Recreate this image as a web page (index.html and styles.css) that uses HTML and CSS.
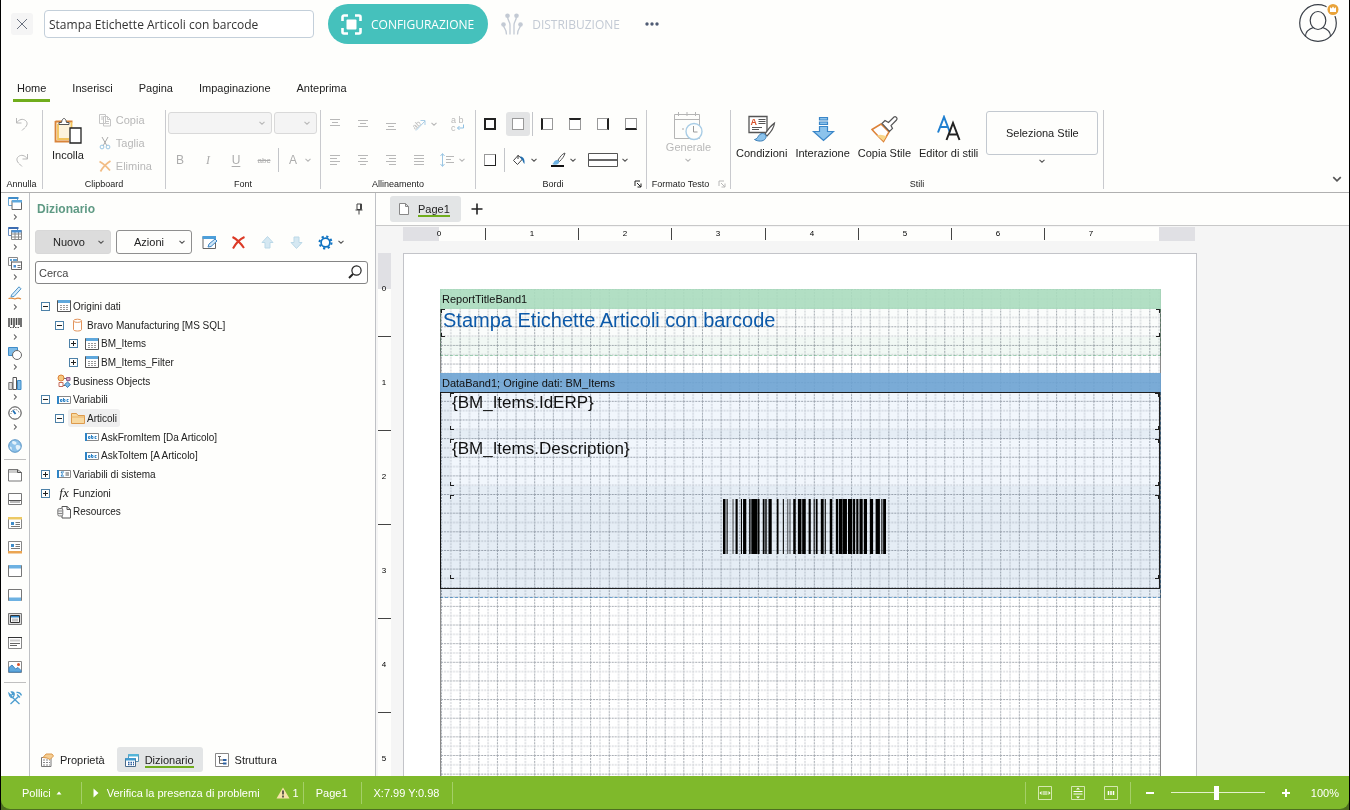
FILE: index.html
```html
<!DOCTYPE html>
<html lang="it">
<head>
    <meta charset="UTF-8">
    <meta name="viewport" content="width=device-width, initial-scale=1.0">
    <title>Stampa Etichette Articoli con barcode</title>
    <link rel="stylesheet" href="styles.css">
</head>
<body>
    <svg class="sprite" aria-hidden="true">
        <symbol id="chev" viewBox="0 0 8 8"><path d="M1.5 2.8 4 5.2 6.5 2.8" fill="none" stroke="currentColor" stroke-width="1.1"/></symbol>
        <symbol id="chev-right" viewBox="0 0 8 8"><path d="M3 1.5 5.3 4 3 6.5" fill="none" stroke="currentColor" stroke-width="1.1"/></symbol>
        <symbol id="launcher" viewBox="0 0 8 8"><path d="M1 6V1h5M3 3l4 4M7 3.5V7H3.5" fill="none" stroke="currentColor" stroke-width="1"/></symbol>
        <symbol id="table" viewBox="0 0 14 14"><path d="M.5 1.5h13v11H.5z" fill="#fff" stroke="#555"/><path d="M1 1h12v3H1z" fill="#5fa8dc"/><path d="M3 6.5h8M3 8.5h8M3 10.5h8" stroke="#999" stroke-dasharray="2 1"/></symbol>
        <symbol id="abc" viewBox="0 0 14 14"><path d="M.5 3.5h13v7H.5z" fill="#fff" stroke="#888"/><path d="M1 3v8" stroke="#2e84c6" stroke-width="2"/><path d="M3.5 6.5h1.500v2H3.5zM6.500 5v3.500H8v-2H6.500M11.500 6.500H10v2h1.500" fill="none" stroke="#2e84c6"/></symbol>
    </svg>

    <div class="app">
        <header class="topbar">
            <button class="close" aria-label="Chiudi"><svg width="12" height="12" viewBox="0 0 12 12"><path d="M1 1l10 10M11 1 1 11" stroke="#6b7280" fill="none"/></svg></button>
            <input class="report-name" type="text" value="Stampa Etichette Articoli con barcode" aria-label="Nome report">
            <button class="step active">
                <svg width="21" height="21" viewBox="0 0 21 21"><path d="M1.5 7V3a1.5 1.5 0 0 1 1.5-1.5h4M14 1.5h4A1.5 1.5 0 0 1 19.5 3v4M19.5 14v4a1.5 1.5 0 0 1-1.5 1.5h-4M7 19.5H3A1.5 1.5 0 0 1 1.5 18v-4" fill="none" stroke="#fff" stroke-width="2.6"/><rect x="5.5" y="5.5" width="10" height="10" rx="1" fill="#fff"/></svg>
                CONFIGURAZIONE
            </button>
            <button class="step">
                <svg width="22" height="22" viewBox="0 0 22 22"><g fill="none" stroke="#c3cad4" stroke-width="1.3"><path d="M2.5 12c0 4 3 3 3 9.5M6.5 3c0 5 2.5 5 2.5 9v9.5M15.5 3c0 5-2.5 5-2.5 9v9.5M19.5 12c0 4-3 3-3 9.5"/></g><g fill="#c3cad4"><circle cx="2.5" cy="11.5" r="2.3"/><circle cx="6.5" cy="2.8" r="2.3"/><circle cx="15.5" cy="2.8" r="2.3"/><circle cx="19.5" cy="11.5" r="2.3"/></g></svg>
                DISTRIBUZIONE
            </button>
            <button class="more" aria-label="Altro"><svg width="14" height="4" viewBox="0 0 14 4" fill="#4f5b73"><circle cx="2" cy="2" r="1.7"/><circle cx="7" cy="2" r="1.7"/><circle cx="12" cy="2" r="1.7"/></svg></button>
            <button class="avatar" aria-label="Profilo">
                <svg width="40" height="42" viewBox="0 3 40 42"><g fill="none" stroke="#3b4048" stroke-width="1.2"><circle cx="19" cy="23" r="18.3"/><ellipse cx="19" cy="20.5" rx="7.8" ry="9"/><path d="M6.5 36.5c0-5 3-7.5 8-9M31.5 36.5c0-5-3-7.5-8-9"/></g><circle cx="34" cy="9.500" r="7" fill="#fefefc"/><circle cx="34" cy="9.500" r="5.5" fill="#e9a33a"/><path d="M31 7l1.500 1.500L34 6.500l1.500 2L37 7v5h-6z" fill="#fff"/></svg>
            </button>
        </header>

        <nav class="tabs">
            <a class="tab active" href="#">Home</a>
            <a class="tab" href="#">Inserisci</a>
            <a class="tab" href="#">Pagina</a>
            <a class="tab" href="#">Impaginazione</a>
            <a class="tab" href="#">Anteprima</a>
        </nav>

        <section class="ribbon">
            <div class="group undo">
                <div class="rows faded">
                    <button class="tool" aria-label="Annulla"><svg width="14" height="16" viewBox="0 0 14 16"><path d="M1.5 2v5h5M1.5 7C4 3 8 2.5 10.5 4.5s2 5-1 7.5L7 14.5" fill="none" stroke="currentColor"/></svg></button>
                    <button class="tool" aria-label="Ripeti"><svg width="14" height="16" viewBox="0 0 14 16"><path d="M12.5 2v5h-5M12.5 7C10 3 6 2.5 3.5 4.5s-2 5 1 7.5L7 14.5" fill="none" stroke="currentColor"/></svg></button>
                </div>
                <div class="caption"><span>Annulla</span></div>
            </div>

            <div class="group clipboard">
                <div class="content">
                    <button class="big">
                        <svg width="28" height="28" viewBox="0 0 28 28"><path d="M2 5h16v19H2z" fill="#fdf3dc"/><path d="M1.5 4.5h17M1.5 4v20.5H15" fill="none" stroke="#d9843a" stroke-width="1.8"/><path d="M4 7v15h11M17.5 5v7" fill="none" stroke="#f2c35c" stroke-width="1.8"/><path d="M5 5.5h2.5C8 2.5 9 1.5 10 1.5s2 1 2.5 4H15v2H5z" fill="#fff" stroke="#555"/><path d="M16 11h11v15H16z" fill="#fff" stroke="#222" stroke-width="1.3"/></svg>
                        Incolla
                    </button>
                    <div class="clip-list">
                        <button><svg width="14" height="14" viewBox="0 0 14 14"><path d="M1.5 1.5h6v9h-6zM5.5 3.5h4l3 3v6.5h-7zM9.5 3.5v3h3M3 4h2M3 6h2M7.5 8.5h3.5M7.5 10.5h3.5" fill="#fefefc" stroke="#c6c6c6"/></svg>Copia</button>
                        <button><svg width="14" height="14" viewBox="0 0 14 14"><path d="M4 1l5 9M10 1 5 10" stroke="#aaa" fill="none"/><circle cx="4" cy="11" r="1.9" fill="none" stroke="#9cc7e4"/><circle cx="10" cy="11" r="1.9" fill="none" stroke="#9cc7e4"/></svg>Taglia</button>
                        <button><svg width="14" height="14" viewBox="0 0 14 14"><path d="M1.5 2.5c4 2 7 5 10.5 9M12.5 2C9 4 5 8 2.5 12.5" fill="none" stroke="#f2bd85" stroke-width="1.8"/></svg>Elimina</button>
                    </div>
                </div>
                <div class="caption"><span>Clipboard</span></div>
            </div>

            <div class="group font">
                <div class="rows faded">
                    <div class="row selects">
                        <span class="select wide"><select disabled aria-label="Carattere"><option></option></select><svg class="chev"><use href="#chev"/></svg></span>
                        <span class="select"><select disabled aria-label="Dimensione"><option></option></select><svg class="chev"><use href="#chev"/></svg></span>
                    </div>
                    <div class="row">
                        <button class="tool letter">B</button>
                        <button class="tool letter italic">I</button>
                        <button class="tool letter underline">U</button>
                        <button class="tool letter strike">abc</button>
                        <i class="sep"></i>
                        <button class="split letter"><span class="face">A</span><svg class="chev"><use href="#chev"/></svg></button>
                    </div>
                </div>
                <div class="caption"><span>Font</span></div>
            </div>

            <div class="group align">
                <div class="rows faded">
                    <div class="row">
                        <button class="tool" aria-label="In alto"><svg width="12" height="12" viewBox="0 0 12 12"><path d="M1 1.5h10M3 4.5h6M1 7.5h10" stroke="currentColor"/></svg></button>
                        <button class="tool" aria-label="Al centro"><svg width="12" height="12" viewBox="0 0 12 12"><path d="M1 2.5h10M3 5.5h6M1 8.5h10" stroke="currentColor"/></svg></button>
                        <button class="tool" aria-label="In basso"><svg width="12" height="12" viewBox="0 0 12 12"><path d="M1 5.5h10M3 8.5h6M1 11.5h10" stroke="currentColor"/></svg></button>
                        <button class="split" aria-label="Angolo"><svg width="16" height="16" viewBox="0 0 16 16"><text x="1" y="12" transform="rotate(-42 5 9)" font-family="Liberation Sans, sans-serif" font-size="8" fill="currentColor">ab</text><path d="M5 14.5 14 5M14 9V4.5h-4.5" fill="none" stroke="#a9cde6"/></svg><svg class="chev"><use href="#chev"/></svg></button>
                        <button class="tool" aria-label="A capo"><svg width="14" height="16" viewBox="0 0 14 16"><g font-family="Liberation Sans, sans-serif" font-size="9" fill="currentColor"><text x="0" y="7">a b</text><text x="0" y="15">c</text></g><path d="M12.500 8.5v3.5H6.500M8.500 10l-2 2 2 2" fill="none" stroke="#8fc0e2"/></svg></button>
                    </div>
                    <div class="row">
                        <button class="tool" aria-label="Sinistra"><svg width="12" height="12" viewBox="0 0 12 12"><path d="M1 1.5h10M1 4.5h7M1 7.5h10M1 10.5h7" stroke="currentColor"/></svg></button>
                        <button class="tool" aria-label="Centro"><svg width="12" height="12" viewBox="0 0 12 12"><path d="M1 1.5h10M3 4.5h6M1 7.5h10M3 10.5h6" stroke="currentColor"/></svg></button>
                        <button class="tool" aria-label="Destra"><svg width="12" height="12" viewBox="0 0 12 12"><path d="M1 1.5h10M4 4.5h7M1 7.5h10M4 10.5h7" stroke="currentColor"/></svg></button>
                        <button class="tool" aria-label="Giustificato"><svg width="12" height="12" viewBox="0 0 12 12"><path d="M1 1.5h10M1 4.5h10M1 7.5h10M1 10.5h10" stroke="currentColor"/></svg></button>
                        <button class="split" aria-label="Interlinea"><svg width="16" height="16" viewBox="0 0 16 16"><path d="M3.5 2v12M1.5 4l2-2.5 2 2.5M1.5 12l2 2.5 2-2.5" fill="none" stroke="#9cc7e4"/><path d="M7 4.5h8M7 7.5h5M7 10.5h8" stroke="currentColor"/></svg><svg class="chev"><use href="#chev"/></svg></button>
                    </div>
                </div>
                <div class="caption"><span>Allineamento</span></div>
            </div>

            <div class="group borders">
                <div class="rows">
                    <div class="row">
                        <button class="tool" aria-label="Tutti i bordi"><i class="box all"></i></button>
                        <button class="tool pressed" aria-label="Nessun bordo"><i class="box"></i></button>
                        <i class="sep"></i>
                        <button class="tool" aria-label="Bordo sinistro"><i class="box left"></i></button>
                        <button class="tool" aria-label="Bordo superiore"><i class="box top"></i></button>
                        <button class="tool" aria-label="Bordo destro"><i class="box right"></i></button>
                        <button class="tool" aria-label="Bordo inferiore"><i class="box bottom"></i></button>
                    </div>
                    <div class="row">
                        <button class="tool" aria-label="Ombra"><i class="box shadow"></i></button>
                        <i class="sep"></i>
                        <button class="split" aria-label="Riempimento"><svg width="16" height="16" viewBox="0 0 16 16"><path d="M7 3.5 2.5 8.5l4 4 5-5.5zM7 3v4" fill="#fff" stroke="#444"/><path d="M9 4.5c3 0 5 2 4.5 7.5-1.5-1-1.5-4-3.5-5z" fill="#2470b0"/></svg><svg class="chev"><use href="#chev"/></svg></button>
                        <button class="split" aria-label="Colore bordo"><svg width="16" height="16" viewBox="0 0 16 16"><path d="M15 1c-3 1-5 4-7 7l1.5 1.5C12 7 14.5 4 15 1z" fill="#fff" stroke="#555"/><path d="M2 12c2 0 1.5-4 5-4 2 0 3 2 1.5 3.5S4 13 2 12z" fill="#6db1e2"/><path d="M1 14h13" stroke="#111" stroke-width="2"/></svg><svg class="chev"><use href="#chev"/></svg></button>
                        <button class="split" aria-label="Stile bordo"><svg width="30" height="16" viewBox="0 0 30 16"><path d="M.5 1.5h29v13H.5z" fill="#fff" stroke="#555"/><path d="M1 8h28" stroke="#333" stroke-width="1.5"/></svg><svg class="chev"><use href="#chev"/></svg></button>
                    </div>
                </div>
                <div class="caption"><span>Bordi</span><button class="launch" aria-label="Opzioni bordi"><svg width="8" height="8"><use href="#launcher"/></svg></button></div>
            </div>

            <div class="group format">
                <div class="content faded">
                    <button class="big">
                        <svg width="30" height="30" viewBox="0 0 30 30"><path d="M1.5 3.5h25v24h-25zM1.5 8.5h25M5.5 1v4M14 1v4M22.5 1v4" fill="none" stroke="#b5b5b5"/><path d="M10 17v2" stroke="#aaa"/><circle cx="21" cy="20.500" r="8" fill="#fefefc" stroke="#a9cde6" stroke-width="1.4"/><path d="M20.5 15v6h4" fill="none" stroke="#999"/></svg>
                        Generale
                        <svg class="chev"><use href="#chev"/></svg>
                    </button>
                </div>
                <div class="caption"><span>Formato Testo</span><button class="launch faded" aria-label="Opzioni formato"><svg width="8" height="8"><use href="#launcher"/></svg></button></div>
            </div>

            <div class="group styles">
                <div class="content">
                    <button class="big">
                        <svg width="28" height="28" viewBox="0 0 28 28"><path d="M1 1.5h18v16H1z" fill="#fff" stroke="#555" stroke-width="1.3"/><text x="2.5" y="10" font-family="Liberation Sans, sans-serif" font-size="9" font-weight="bold" fill="#d8502a">A</text><path d="M10.5 4.5h7M10.5 6.5h7M10.5 8.5h7M4 12.5h10M4 14.5h7" stroke="#555"/><path d="M26.5 8c-4 3-7 7-9.5 11l2 2c4-4 7-8 7.5-13z" fill="#fff" stroke="#555" stroke-width="1.2"/><path d="M6.5 24.5c4-.5 3.5-6 8-6 3 0 4.500 2.500 3 5-2 3.500-8 3-11 1z" fill="#8cc3ec" stroke="#3a7db5"/></svg>
                        Condizioni
                    </button>
                    <button class="big">
                        <svg width="28" height="28" viewBox="0 0 28 28"><path d="M10.5 2.500h8v2.500h-8zM10.5 7h8v2.500h-8zM10.5 11.500h8v5h6L14.5 25.500l-10-9h6z" fill="#8cc3ec" stroke="#3a86c8" stroke-width="1.2"/></svg>
                        Interazione
                    </button>
                    <button class="big">
                        <svg width="28" height="28" viewBox="0 0 28 28"><path d="M2 14.5 11 9l8 8-5.5 9.5C9 22 5 18 2 14.5z" fill="#fff" stroke="#dd8238" stroke-width="1.5"/><path d="M7 20.5c4-2 6 0 9.5.5L13.5 26z" fill="#f8d68a"/><path d="M12 8.5l3-3 3.5 2L24 2c1.5-1 4 1 2.5 3L21 10.5l1.5 3-3 3z" fill="#fff" stroke="#555" stroke-width="1.2"/></svg>
                        Copia Stile
                    </button>
                    <button class="big">
                        <svg width="28" height="28" viewBox="0 0 28 28"><path d="M3 17.5 9 2l6 15.5M5 12h8" fill="none" stroke="#1f7fd0" stroke-width="2"/><path d="M11.5 25 18 8l6.5 17M13.5 19.5h9" fill="none" stroke="#222" stroke-width="2"/></svg>
                        Editor di stili
                    </button>
                    <div class="style-pick">
                        <button class="style-button">Seleziona Stile</button>
                        <svg class="chev"><use href="#chev"/></svg>
                    </div>
                </div>
                <div class="caption"><span>Stili</span></div>
            </div>
            <button class="collapse" aria-label="Comprimi"><svg width="12" height="12"><use href="#chev"/></svg></button>
        </section>

        <main class="main">
            <aside class="toolbox">
                <button class="component"><svg width="14" height="14" viewBox="0 0 14 14"><path d="M.5 1.5h9v8h-9z" fill="#fff" stroke="#6aa6d3"/><path d="M.5 1h10v2H.5z" fill="#3f8cc8"/><path d="M4 4.5h9.5v9H4z" fill="#fff" stroke="#666"/><path d="M4 4h10v2.5H4z" fill="#5fa8dc"/></svg><svg class="chev"><use href="#chev-right"/></svg></button>
                <button class="component"><svg width="14" height="14" viewBox="0 0 14 14"><path d="M.5 1.5h9v8h-9z" fill="#fff" stroke="#6a8fc0"/><path d="M.5 1h10v2H.5z" fill="#3b6cb0"/><path d="M3.5 4.5h10v9h-10zM3.5 8h10M3.5 11h10M7 5v8M10.5 5v8" fill="#fff" stroke="#888"/><path d="M3.5 4h10v2.5h-10z" fill="#4d8fd0"/></svg><svg class="chev"><use href="#chev-right"/></svg></button>
                <button class="component"><svg width="14" height="14" viewBox="0 0 14 14"><path d="M.5 1.5h9v8h-9z" fill="#fff" stroke="#888"/><path d="M2 4h2M5 4h4" stroke="#2e84c6" stroke-width="1.5"/><path d="M3.5 5.5h10v8h-10z" fill="#fff" stroke="#666"/><path d="M4 5h9v2H4z" fill="#aaa"/><path d="M5.5 9h2.5v2.5H5.5z" fill="#4d8fd0"/><path d="M9.5 9.5h3M9.5 11.5h3" stroke="#777"/></svg><svg class="chev"><use href="#chev-right"/></svg></button>
                <button class="component"><svg width="14" height="14" viewBox="0 0 14 14"><path d="M3.5 9 11 .8l2 2L6 10.500l-3 .5z" fill="#d8ecfa" stroke="#4c93c8"/><path d="M.5 12.5c4-1.500 5 1 7 .2s3-1 5.500.3" fill="none" stroke="#e08a3c" stroke-width="1.2"/></svg><svg class="chev"><use href="#chev-right"/></svg></button>
                <button class="component"><svg width="14" height="14" viewBox="0 0 14 14"><path d="M1 2v9M3.500 2v7M6 2v9M8.500 2v7M11 2v7M13 2v9" stroke="#444" stroke-width="1.5"/><path d="M2 11.5h10" stroke="#555" stroke-dasharray="1.5 1"/></svg><svg class="chev"><use href="#chev-right"/></svg></button>
                <button class="component"><svg width="14" height="14" viewBox="0 0 14 14"><path d="M.5 1.5h9v8h-9z" fill="#7dbbe8" stroke="#3f8cc8"/><circle cx="9" cy="9" r="4.5" fill="#fff" stroke="#666"/></svg><svg class="chev"><use href="#chev-right"/></svg></button>
                <button class="component"><svg width="14" height="14" viewBox="0 0 14 14"><path d="M.8 6.5h3.5v7H.8z" fill="#ddd" stroke="#777"/><path d="M5 1.5h3.5v12H5z" fill="#fff" stroke="#555"/><path d="M9.5 4.5H13v9H9.5z" fill="#7dbbe8" stroke="#3f8cc8"/></svg><svg class="chev"><use href="#chev-right"/></svg></button>
                <button class="component"><svg width="14" height="14" viewBox="0 0 14 14"><circle cx="7" cy="7" r="6.2" fill="#fff" stroke="#444"/><path d="M3 8a4 4 0 0 1 8-1" fill="none" stroke="#666" stroke-dasharray="1 1"/><path d="M7.5 8 5 4.5" stroke="#1d6fb5" stroke-width="1.8"/></svg><svg class="chev"><use href="#chev-right"/></svg></button>
                <button class="band globe"><svg width="14" height="14" viewBox="0 0 14 14"><circle cx="7" cy="7" r="6.3" fill="#8fc3ea" stroke="#5b94c4"/><path d="M5 2c2 0 4 1 3.500 2.500S6.500 6 5 5 4 2.500 5 2zM8 6.500c2-1 4.500 0 4.500 1.500s-2 3-3 3-2.500-3.500-1.500-4.500zM1.500 7.500l2 .5.500 3-1.500-1z" fill="#e4f2fb"/></svg></button>
                <hr>
                <button class="band"><svg width="14" height="14" viewBox="0 0 14 14"><path d="M.5 1.5h9l4 3v8.500H.5z" fill="#fff" stroke="#777"/><path d="M1 2h8l4 3H1z" fill="#ccc"/><path d="M9.5 1.5v3h4" fill="none" stroke="#555"/></svg></button>
                <button class="band"><svg width="14" height="14" viewBox="0 0 14 14"><path d="M.5 1.5h13v11H.5z" fill="#fff" stroke="#777"/><path d="M2 9h10v2H2z" fill="#bbb"/><path d="M1 8.5h12" stroke="#555"/></svg></button>
                <button class="band"><svg width="14" height="14" viewBox="0 0 14 14"><path d="M.5 1.5h13v11H.5z" fill="#fff" stroke="#888"/><path d="M0 1h14v2.500H0z" fill="#ecc964"/><path d="M3 6h3v3H3z" fill="#3f8cc8"/><path d="M7.5 6.500H12M7.5 8.500H12M3 10.500h9" stroke="#777"/></svg></button>
                <button class="band"><svg width="14" height="14" viewBox="0 0 14 14"><path d="M.5 1.5h13v11H.5z" fill="#fff" stroke="#888"/><path d="M0 11h14v2.500H0z" fill="#eba552"/><path d="M3 4h3v3H3z" fill="#3f8cc8"/><path d="M7.5 4.500H12M7.5 6.500H12M3 8.500h9" stroke="#777"/></svg></button>
                <button class="band"><svg width="14" height="14" viewBox="0 0 14 14"><path d="M.5 1.5h13v11H.5z" fill="#fff" stroke="#777"/><path d="M1 1h12v3.500H1z" fill="#6db1e2"/></svg></button>
                <button class="band"><svg width="14" height="14" viewBox="0 0 14 14"><path d="M.5 1.5h13v11H.5z" fill="#fff" stroke="#777"/><path d="M1 9.500h12V13H1z" fill="#6db1e2"/></svg></button>
                <button class="band"><svg width="14" height="14" viewBox="0 0 14 14"><path d="M.5 1.5h13v11H.5z" fill="#ddd" stroke="#777"/><path d="M2.500 3.500h9v7h-9z" fill="#fff" stroke="#333"/><path d="M3 4h8v1.500H3z" fill="#2e84c6"/><path d="M4.500 8h6" stroke="#888" stroke-width="3" stroke-dasharray="1 1"/></svg></button>
                <button class="band"><svg width="14" height="14" viewBox="0 0 14 14"><path d="M.5 1.5h13v11H.5z" fill="#fff" stroke="#888"/><path d="M0 1.5h14" stroke="#333"/><path d="M2 4.5h10" stroke="#ccc" stroke-width="2"/><path d="M2 7.500h10M2 9.500h7" stroke="#666"/></svg></button>
                <button class="band"><svg width="14" height="14" viewBox="0 0 14 14"><path d="M.5 1.5h13v11H.5z" fill="#fff" stroke="#888"/><path d="M1 12V7.500L4 5l3.500 4L10 7.500l3 3V12z" fill="#5fa8dc" stroke="#3f86c4"/><circle cx="10.500" cy="4.500" r="1.500" fill="#d8502a"/></svg></button>
                <hr>
                <button class="band"><svg width="14" height="14" viewBox="0 0 14 14"><g fill="none" stroke="#4c9dcf" stroke-width="1.3"><path d="M3 5 11.500 13M11 5 2.500 13"/><path d="M1 2.500 3 4.500 5 3 3.500 1C6 .5 7 3 5.500 5.500S1.500 6 1 2.500zM8.500 1.500c3-.5 4 .5 5 3M9 3.500l3 3"/></g></svg></button>
            </aside>

            <section class="dictionary">
                <div class="panel-title">
                    <h2>Dizionario</h2>
                    <button aria-label="Fissa"><svg width="8" height="12" viewBox="0 0 8 12"><path d="M2 1h4.500v5.500H2zM.5 7h7M4 7v4.500M5.500 1v5" fill="none" stroke="#444"/></svg></button>
                </div>
                <div class="actions">
                    <button class="drop filled"><span>Nuovo</span><svg class="chev"><use href="#chev"/></svg></button>
                    <button class="drop"><span>Azioni</span><svg class="chev"><use href="#chev"/></svg></button>
                    <button class="act" aria-label="Modifica"><svg width="15" height="15" viewBox="0 0 15 15"><path d="M1 1.5h12.500v12H1z" fill="#fff" stroke="#666"/><path d="M.5 1h13.500v3H.5z" fill="#4d9fda"/><path d="M6 12l1-3 6-5 2 2-6 5.500z" fill="#cfe7f8" stroke="#3f86c4"/></svg></button>
                    <button class="act" aria-label="Elimina"><svg width="15" height="15" viewBox="0 0 15 15"><path d="M1.5 2c5 2.500 8 6 11.500 11M13.500 2C9 4 5 8 2 13.500" fill="none" stroke="#dc3a26" stroke-width="2"/></svg></button>
                    <button class="act" aria-label="Su"><svg width="15" height="15" viewBox="0 0 15 15"><path d="M7.5 1.5 13 7.500h-3V13H5V7.500H2z" fill="#d5e8f2" stroke="#bcd9e8"/></svg></button>
                    <button class="act" aria-label="Giù"><svg width="15" height="15" viewBox="0 0 15 15"><path d="M7.5 13.500 13 7.500h-3V2H5v5.500H2z" fill="#d5e8f2" stroke="#bcd9e8"/></svg></button>
                    <button class="act gear" aria-label="Impostazioni"><svg width="15" height="15" viewBox="0 0 15 15"><circle cx="7.5" cy="7.5" r="4.4" fill="#fff" stroke="#0f73c2" stroke-width="1.7"/><circle cx="7.5" cy="7.5" r="6" fill="none" stroke="#0f73c2" stroke-width="2" stroke-dasharray="2.2 2.512"/></svg><svg class="chev"><use href="#chev"/></svg></button>
                </div>
                <div class="search">
                    <input type="text" placeholder="Cerca" aria-label="Cerca">
                    <svg width="14" height="14" viewBox="0 0 14 14"><circle cx="8.5" cy="5.5" r="4.6" fill="none" stroke="#222" stroke-width="1.2"/><path d="M5 9 1 13" stroke="#222" stroke-width="2"/></svg>
                </div>

                <ul class="tree">
                    <li><i class="toggle minus"></i><svg class="icon"><use href="#table"/></svg>Origini dati</li>
                    <li class="level-1"><i class="toggle minus"></i><svg class="icon" viewBox="0 0 14 14"><path d="M2.500 3v8.500c0 2 8 2 8 0V3" fill="#fff" stroke="#e2935a"/><ellipse cx="6.500" cy="2.8" rx="4" ry="1.6" fill="#fff" stroke="#e2935a"/></svg>Bravo Manufacturing [MS SQL]</li>
                    <li class="level-2"><i class="toggle plus"></i><svg class="icon"><use href="#table"/></svg>BM_Items</li>
                    <li class="level-2"><i class="toggle plus"></i><svg class="icon"><use href="#table"/></svg>BM_Items_Filter</li>
                    <li><i class="toggle none"></i><svg class="icon" viewBox="0 0 14 14"><path d="M6 4.5h5v3M4 8v3.500h4" fill="none" stroke="#666"/><circle cx="4" cy="4" r="3" fill="#f5c981" stroke="#dd8238"/><path d="M9.500 3.500h3.500v3H9.500z" fill="#d8a3c8" stroke="#93628a"/><path d="M2 8.500h4v4H2z" fill="#fff" stroke="#c46a5a"/><path d="M10.500 8l2.800 2.500-2.800 3-2.800-3z" fill="#7dbbe8" stroke="#3a7db5"/></svg>Business Objects</li>
                    <li><i class="toggle minus"></i><svg class="icon"><use href="#abc"/></svg>Variabili</li>
                    <li class="level-1"><i class="toggle minus"></i><span class="selected"><svg class="icon" viewBox="0 0 14 14"><path d="M.5 12.500v-10h5l1.500 2h6.500v8z" fill="#f8d9a0" stroke="#dd9a4c"/><path d="M.5 6h13" stroke="#e9b26b"/></svg>Articoli</span></li>
                    <li class="level-2"><i class="toggle none"></i><svg class="icon"><use href="#abc"/></svg>AskFromItem [Da Articolo]</li>
                    <li class="level-2"><i class="toggle none"></i><svg class="icon"><use href="#abc"/></svg>AskToItem [A Articolo]</li>
                    <li><i class="toggle plus"></i><svg class="icon" viewBox="0 0 14 14"><path d="M.5 3.500h13v7H.5z" fill="#fff" stroke="#888"/><path d="M1 3v8" stroke="#2e84c6" stroke-width="2"/><path d="M7 5H4l1.500 2L4 9h3" fill="none" stroke="#2e84c6"/><path d="M8.500 6h3.500M8.500 8h3.500" stroke="#555"/></svg>Variabili di sistema</li>
                    <li><i class="toggle plus"></i><span class="icon fx">fx</span>Funzioni</li>
                    <li><i class="toggle none"></i><svg class="icon" viewBox="0 0 14 14"><path d="M5 1.500h5l3.500 3V13H5z" fill="#fff" stroke="#555"/><path d="M10 1.500v3h3.500" fill="none" stroke="#555"/><rect x=".8" y="3.500" width="5" height="7.500" rx="1.500" fill="#eee" stroke="#777"/><path d="M1 6h4.500M1 8.500h4.500" stroke="#888"/></svg>Resources</li>
                </ul>

                <nav class="panel-tabs">
                    <button><svg class="icon" viewBox="0 0 14 14"><path d="M1.5 4.500H11v9H1.500z" fill="#fff" stroke="#777"/><path d="M3 7h7M3 9.500h7M3 12h7" stroke="#888" stroke-dasharray="2 1"/><path d="M3 4.500 6 1h6l1.500 2L10 6.500 7 5z" fill="#f5cd92" stroke="#dd9a4c"/></svg><span>Proprietà</span></button>
                    <button class="active"><svg class="icon" viewBox="0 0 14 14"><path d="M3.500 1.500h10v7h-10z" fill="#fff" stroke="#5b94b4"/><path d="M3.500 1h10v2.500h-10z" fill="#54b5d8"/><path d="M.5 5.500h10v8H.5z" fill="#fff" stroke="#4a6a8a"/><path d="M.5 5h10v2.500H.5z" fill="#3f9bd0"/><path d="M3 9.500h6M3 11.500h6" stroke="#2a5fa0" stroke-width="1.5" stroke-dasharray="1.5 1"/></svg><span>Dizionario</span></button>
                    <button><svg class="icon" viewBox="0 0 14 14"><path d="M.5.5h13v13H.5z" fill="#fff" stroke="#888"/><path d="M3 3.500h3M4.500 4v6.500H8M4.500 7H8" fill="none" stroke="#666"/><path d="M8 7h3.500M8 10.500h3.500" stroke="#2a5fa0" stroke-width="1.8"/></svg><span>Struttura</span></button>
                </nav>
            </section>

            <section class="designer">
                <div class="page-tabs">
                    <button class="page-tab"><svg width="10" height="12" viewBox="0 0 10 12"><path d="M.5.5h6l3 3v8h-9zM6.500.5v3h3" fill="#fff" stroke="#888"/></svg><span>Page1</span></button>
                    <button class="add" aria-label="Aggiungi pagina"><svg width="12" height="12" viewBox="0 0 12 12"><path d="M6 .5v11M.5 6h11" stroke="#222" stroke-width="1.6"/></svg></button>
                </div>
                <div class="workspace">
                    <svg class="ruler-x" width="792" height="14">
                        <path d="M0 0h36v14H0zM756 0h36v14H756z" fill="#e0e0e4"/>
                        <path d="M82.500 1v12M175.500 1v12M268.500 1v12M362.500 1v12M455.500 1v12M548.500 1v12M641.500 1v12" stroke="#444"/>
                        <g text-anchor="middle"><text x="36" y="9">0</text><text x="129" y="9">1</text><text x="222" y="9">2</text><text x="315" y="9">3</text><text x="409" y="9">4</text><text x="502" y="9">5</text><text x="595" y="9">6</text><text x="688" y="9">7</text></g>
                    </svg>
                    <svg class="ruler-y" width="13" height="100%">
                        <path d="M0 0h13v36H0z" fill="#e0e0e4"/>
                        <path d="M0 83.500h13M0 177.500h13M0 271.500h13M0 365.500h13M0 459.500h13" stroke="#444"/>
                        <g text-anchor="middle"><text x="6" y="38">0</text><text x="6" y="132">1</text><text x="6" y="226">2</text><text x="6" y="320">3</text><text x="6" y="414">4</text><text x="6" y="508">5</text></g>
                    </svg>
                    <div class="paper">
                        <div class="printable">
                            <svg class="grid" width="100%" height="100%">
                                <defs>
                                    <pattern id="dots" width="18.640" height="18.640" patternUnits="userSpaceOnUse">
                                        <path d="M0 .5h18.640M.5 0v18.640" stroke="#a4a9b0" stroke-dasharray="2 1"/>
                                        <path d="M0 9.820h18.640M9.820 0v18.640" stroke="#c9ccd1" stroke-dasharray="2 1"/>
                                    </pattern>
                                </defs>
                                <rect width="100%" height="100%" fill="url(#dots)"/>
                            </svg>
                            <div class="report-band title-band">
                                <div class="band-head">ReportTitleBand1</div>
                                <div class="band-body"><div class="item title-text">Stampa Etichette Articoli con barcode</div></div>
                            </div>
                            <div class="report-band data-band">
                                <div class="band-head">DataBand1; Origine dati: BM_Items</div>
                                <div class="band-body">
                                    <div class="data-panel">
                                        <div class="item field erp">{BM_Items.IdERP}</div>
                                        <div class="item field">{BM_Items.Description}</div>
                                        <div class="item code">
                                            <svg width="163" height="55" viewBox="0 0 455 1" preserveAspectRatio="none" role="img" aria-label="Barcode"><path d="M0 0h7v1h-7zM10 0h3v1h-3zM27 0h2v1h-2zM35 0h6v1h-6zM50 0h3v1h-3zM56 0h9v1h-9zM73 0h4v1h-4zM79 0h16v1h-16zM96 0h6v1h-6zM111 0h5v1h-5zM118 0h4v1h-4zM127 0h9v1h-9zM150 0h5v1h-5zM167 0h3v1h-3zM180 0h2v1h-2zM186 0h2v1h-2zM196 0h7v1h-7zM209 0h10v1h-10zM221 0h10v1h-10zM239 0h6v1h-6zM253 0h3v1h-3zM259 0h5v1h-5zM273 0h8v1h-8zM284 0h3v1h-3zM298 0h7v1h-7zM315 0h6v1h-6zM323 0h10v1h-10zM334 0h12v1h-12zM349 0h12v1h-12zM363 0h6v1h-6zM372 0h6v1h-6zM381 0h9v1h-9zM393 0h9v1h-9zM410 0h9v1h-9zM426 0h12v1h-12zM442 0h3v1h-3zM447 0h8v1h-8z"/></svg>
                                        </div>
                                    </div>
                                </div>
                            </div>
                        </div>
                    </div>
                </div>
            </section>
        </main>

        <footer class="status">
            <button class="units">Pollici <svg width="6" height="4" viewBox="0 0 6 4"><path d="M.5 3.500 3 .5l2.500 3z" fill="#fff"/></svg></button>
            <button class="check"><svg width="6" height="10" viewBox="0 0 6 10"><path d="M.5.5v9l5-4.500z" fill="#fff"/></svg>Verifica la presenza di problemi</button>
            <span class="warnings"><svg width="14" height="12" viewBox="0 0 14 12"><path d="M7 .5 13.500 11.500H.5z" fill="#f6e3a8"/><path d="M7 3.500v4M7 8.500v2" stroke="#333" stroke-width="1.5"/></svg>1</span>
            <span class="cell">Page1</span>
            <span class="cell">X:7.99 Y:0.98</span>
            <div class="views">
                <button aria-label="Larghezza pagina"><svg width="14" height="14" viewBox="0 0 14 14"><path d="M.5.5h13v13H.5z" fill="none" stroke="#d4e8b0"/><path d="M4.500 6h5M4.500 8h5" stroke="#fff"/><path d="M1.500 7l2-2v4zM12.500 7l-2-2v4z" fill="#fff"/></svg></button>
                <button aria-label="Pagina intera"><svg width="14" height="14" viewBox="0 0 14 14"><path d="M.5.5h13v13H.5z" fill="none" stroke="#d4e8b0"/><path d="M2.500 5.500h9M2.500 8h9" stroke="#fff"/><path d="M7 1.500l2 2H5zM7 12.500l2-2H5z" fill="#fff"/></svg></button>
                <button aria-label="Pagine affiancate"><svg width="14" height="14" viewBox="0 0 14 14"><path d="M.5.5h13v13H.5z" fill="none" stroke="#d4e8b0"/><path d="M4.500 5v4M7 5v4M9.500 5v4" stroke="#fff" stroke-width="1.5"/></svg></button>
            </div>
            <div class="zoom">
                <button aria-label="Riduci"><svg width="8" height="8" viewBox="0 0 8 8"><path d="M0 4h8" stroke="#fff" stroke-width="2"/></svg></button>
                <input type="range" min="0" max="100" value="48" aria-label="Zoom">
                <button aria-label="Ingrandisci"><svg width="8" height="8" viewBox="0 0 8 8"><path d="M0 4h8M4 0v8" stroke="#fff" stroke-width="2"/></svg></button>
                <span class="percent">100%</span>
            </div>
        </footer>
    </div>
</body>
</html>
```
FILE: styles.css
```css
* {
    box-sizing: border-box;
}
body {
    margin: 0;
    font-family: "Liberation Sans", Arial, sans-serif;
    font-size: 11px;
    color: #222;
    background-color: #4d6e20;
}
button {
    display: flex;
    align-items: center;
    justify-content: center;
    margin: 0;
    padding: 0;
    border: none;
    background: none;
    font: inherit;
    color: inherit;
    white-space: nowrap;
}
svg {
    display: block;
    flex: none;
}
.sprite {
    display: none;
}
.chev {
    width: 8px;
    height: 8px;
    color: #555;
}
.faded .chev {
    color: #b8b8b8;
}
.icon {
    width: 14px;
    height: 14px;
}
.app {
    display: flex;
    flex-direction: column;
    height: 100vh;
    border: solid #000;
    border-width: 0 1px;
}

/* top bar */
.topbar {
    display: flex;
    align-items: center;
    height: 72px;
    padding: 0 10px 24px;
    background-color: #fefefc;
    font-family: "Open Sans", "Noto Sans", sans-serif;
    font-size: 12px;
}
.close {
    width: 22px;
    height: 22px;
    border-radius: 3px;
    background-color: #f5f5f5;
}
.report-name {
    width: 270px;
    height: 28px;
    margin: 0 14px 0 11px;
    padding: 0 4px;
    border: 1px solid #c3cfda;
    border-radius: 4px;
    font: inherit;
    color: #333;
    background-color: #fff;
}
.step {
    gap: 9px;
    height: 40px;
    padding: 0 14px 0 13px;
    border-radius: 20px;
    color: #c3cad4;
}
.step.active {
    color: #fff;
    background-color: #45c1bc;
}
.more {
    width: 36px;
    height: 24px;
}
.avatar {
    margin-left: auto;
}

/* ribbon tabs */
.tabs {
    display: flex;
    gap: 18px;
    height: 30px;
    padding: 0 12px;
    background-color: #fefefc;
}
.tab {
    padding: 10px 4px 0;
    border-bottom: 3px solid transparent;
    color: #222;
    line-height: 13px;
    text-decoration: none;
}
.tab.active {
    border-color: #70ad1c;
}

/* ribbon */
.ribbon {
    display: flex;
    height: 91px;
    padding-top: 8px;
    border-bottom: 1px solid #b0b0b0;
    background-color: #fefefc;
}
.group {
    display: flex;
    flex-direction: column;
    flex: none;
    height: 79px;
    border-right: 1px solid #c9cace;
}
.group.undo {
    width: 42px;
}
.group.clipboard {
    width: 123px;
}
.group.font,
.group.align {
    width: 155px;
}
.group.borders {
    width: 171px;
}
.group.format {
    width: 84px;
}
.group.styles {
    width: 373px;
}
.content {
    display: flex;
    flex: 1;
}
.rows {
    display: flex;
    flex-direction: column;
    flex: 1;
    gap: 12px;
    padding-top: 2px;
}
.row {
    display: flex;
    height: 24px;
}
.faded {
    color: #b8b8b8;
}
.undo .rows {
    align-items: center;
}
.caption {
    display: flex;
    height: 13px;
    font-size: 9px;
    line-height: 16px;
    text-align: center;
    white-space: nowrap;
}
.caption span {
    flex: 1;
}
.launch {
    width: 16px;
    height: 16px;
}
.tool {
    width: 28px;
    height: 24px;
}
.tool.pressed {
    width: 24px;
    margin: 0 2px;
    border-radius: 3px;
    background-color: #e3e4e5;
}
.split {
    gap: 3px;
    height: 24px;
    padding: 0 6px;
}
.split + .split {
    padding-right: 5px;
}
.sep {
    flex: none;
    width: 1px;
    height: 24px;
    background-color: #c3c5c9;
}
.letter {
    font-size: 12px;
    color: #adadad;
}
.face {
    width: 16px;
}
.italic {
    font-family: "Liberation Serif", serif;
    font-style: italic;
}
.underline {
    text-decoration: underline;
    text-underline-offset: 2px;
}
.strike {
    font-size: 8px;
    text-decoration: line-through;
}
.selects {
    gap: 2px;
    padding-left: 2px;
}
.select {
    position: relative;
    width: 43px;
    height: 22px;
}
.select.wide {
    width: 104px;
}
.select select {
    width: 100%;
    height: 100%;
    border: 1px solid #d9d9d9;
    border-radius: 3px;
    background-color: #f4f4f4;
    appearance: none;
    opacity: 1;
}
.select .chev {
    position: absolute;
    top: 7px;
    right: 6px;
}
.box {
    width: 12px;
    height: 12px;
    border: 1px solid #999;
    background-color: #fff;
}
.box.all {
    border: 2px solid #222;
}
.box.left {
    border-left: 2px solid #222;
}
.box.top {
    border-top: 2px solid #222;
}
.box.right {
    border-right: 2px solid #222;
}
.box.bottom {
    border-bottom: 2px solid #222;
}
.box.shadow {
    border-right-color: #222;
    border-bottom-color: #222;
}
.big {
    flex-direction: column;
    justify-content: flex-start;
    gap: 4px;
    padding: 5px 4px 0;
    line-height: 13px;
}
.clipboard .big {
    padding: 7px 4px 0 9px;
}
.styles .content {
    padding-left: 1px;
}
.format .content {
    justify-content: center;
}
.format .big {
    gap: 0;
    padding-top: 1px;
}
.format .big .chev {
    margin-top: 2px;
}
.clip-list {
    display: flex;
    flex-direction: column;
    align-items: flex-start;
    gap: 3px;
    padding-left: 10px;
    color: #b8b8b8;
}
.clip-list button {
    gap: 4px;
    height: 20px;
}
.style-pick {
    display: flex;
    flex-direction: column;
    align-items: center;
    gap: 2px;
    padding: 1px 0 0 4px;
}
.style-button {
    width: 112px;
    height: 44px;
    border: 1px solid #c3c9d0;
    border-radius: 3px;
}
.collapse {
    align-self: flex-end;
    width: 24px;
    height: 26px;
    margin-left: auto;
    color: #555;
}

/* main area */
.main {
    display: flex;
    flex: 1;
    min-height: 0;
    background-color: #fefefc;
}
.toolbox {
    flex: none;
    width: 29px;
    padding-top: 3px;
    border-right: 1px solid #bfc1c5;
}
.component {
    flex-direction: column;
    justify-content: flex-start;
    gap: 3px;
    width: 28px;
    height: 30px;
}
.band {
    width: 28px;
    height: 24px;
}
.band.globe {
    height: 20px;
}
.toolbox hr {
    margin: 3px;
    border: none;
    border-top: 1px solid #c0c0c0;
}
.dictionary {
    display: flex;
    flex-direction: column;
    flex: none;
    width: 346px;
    padding: 0 7px 0 5px;
    border-right: 1px solid #bfc1c5;
}
.panel-title {
    display: flex;
    align-items: center;
    justify-content: space-between;
    height: 32px;
    padding: 0 5px 0 2px;
}
.panel-title h2 {
    margin: 0;
    font-size: 12px;
    color: #5f9a84;
}
.actions {
    display: flex;
    gap: 5px;
    height: 24px;
    margin: 5px 0 7px;
}
.drop {
    justify-content: space-between;
    width: 76px;
    padding: 0 5px 0 17px;
    border: 1px solid #8f8f8f;
    border-radius: 3px;
}
.drop.filled {
    border-color: #d8d8d8;
    background-color: #dcdcdc;
}
.act {
    width: 24px;
}
.act.gear {
    width: 36px;
    gap: 4px;
}
.search {
    position: relative;
    height: 23px;
}
.search input {
    width: 100%;
    height: 100%;
    padding: 0 24px 0 3px;
    border: 1px solid #858585;
    border-radius: 3px;
    font: inherit;
    background-color: #fff;
}
.search input::placeholder {
    color: #444;
}
.search svg {
    position: absolute;
    top: 4px;
    right: 6px;
}
.tree {
    display: flex;
    flex-direction: column;
    height: 224px;
    margin: 13px 0 0;
    padding: 0 0 0 6px;
    list-style: none;
    font-size: 10px;
    white-space: nowrap;
}
.tree li {
    display: flex;
    flex: 1;
    align-items: center;
}
.tree .level-1 {
    padding-left: 14px;
}
.tree .level-2 {
    padding-left: 28px;
}
.tree .icon {
    flex: none;
    margin-right: 2px;
}
.toggle {
    flex: none;
    width: 9px;
    height: 9px;
    margin-right: 7px;
    border: 1px solid #4d81a8;
    background: linear-gradient(#222, #222) center / 5px 1px no-repeat;
}
.toggle.plus {
    background: linear-gradient(#222, #222) center / 5px 1px no-repeat, linear-gradient(#222, #222) center / 1px 5px no-repeat;
}
.toggle.none {
    border: none;
    background: none;
}
.selected {
    display: flex;
    align-items: center;
    height: 18px;
    margin-left: -3px;
    padding: 0 3px;
    border-radius: 3px;
    background-color: #efefef;
}
.fx {
    font-family: "Liberation Serif", serif;
    font-size: 13px;
    font-style: italic;
    line-height: 14px;
    text-align: center;
}
.panel-tabs {
    display: flex;
    gap: 7px;
    margin-top: auto;
    padding-bottom: 4px;
}
.panel-tabs button {
    gap: 6px;
    height: 25px;
    padding: 0 5px;
    border-radius: 3px;
}
.panel-tabs .active {
    padding: 0 9px 0 8px;
    background-color: #e3e5e6;
}
.panel-tabs .active span,
.page-tab span {
    padding-top: 2px;
    border-bottom: 2px solid #70ad1c;
}

/* designer */
.designer {
    display: flex;
    flex-direction: column;
    flex: 1;
    min-width: 0;
}
.page-tabs {
    display: flex;
    align-items: center;
    height: 33px;
    padding-left: 14px;
    border-bottom: 1px solid #c8c8c8;
}
.page-tab {
    gap: 9px;
    height: 26px;
    padding: 0 11px 0 9px;
    border-radius: 3px;
    background-color: #e3e5e6;
}
.add {
    width: 32px;
    height: 24px;
}
.workspace {
    display: grid;
    grid-template-columns: 13px 794px;
    grid-template-rows: 14px 1fr;
    flex: 1;
    gap: 12px;
    min-height: 0;
    padding: 1px 0 0 2px;
    overflow: hidden;
    background-color: #f5f5f5;
}
.ruler-x,
.ruler-y {
    background-color: #fefefc;
    font-size: 8px;
}
.ruler-x {
    grid-column: 2;
}
.paper {
    padding: 35px 35px 0 36px;
    border: 1px solid #c3c4c9;
    border-bottom: none;
    background-color: #fff;
}
.printable {
    position: relative;
    height: 100%;
    border: solid #8a8a8a;
    border-width: 0 1px;
}
.grid {
    position: absolute;
    top: 0;
    left: 0;
}
.report-band {
    margin: 0 -1px;
}
.band-head {
    position: relative;
    height: 19px;
    padding-left: 2px;
    color: #111;
    line-height: 20px;
}
.title-band {
    margin-bottom: 17px;
}
.title-band .band-head {
    height: 20px;
    background-color: rgba(170, 220, 190, 0.9);
}
/* bodies tint the grid instead of covering it */
.band-body {
    position: relative;
    mix-blend-mode: multiply;
}
.title-band .band-body {
    height: 47px;
    border: 1px dashed #a4d8b8;
    border-top: none;
    background-color: #f1f8f4;
}
.data-band .band-head {
    background-color: rgba(108, 162, 210, 0.9);
}
.data-band .band-body {
    height: 206px;
    border-bottom: 1px dashed #6fa8d6;
    border-right: 1px dashed #6fa8d6;
    background-color: #e5edf5;
}
.data-panel {
    display: flex;
    flex-direction: column;
    gap: 9px;
    height: 197px;
    padding-left: 9px;
    border: 1px solid #222;
}

/* selectable items carry a bracket in every corner */
.item {
    --c: linear-gradient(#222, #222);
    background:
        var(--c) left top / 4px 1px, var(--c) left top / 1px 4px,
        var(--c) right top / 4px 1px, var(--c) right top / 1px 4px,
        var(--c) left bottom / 4px 1px, var(--c) left bottom / 1px 4px,
        var(--c) right bottom / 4px 1px, var(--c) right bottom / 1px 4px;
    background-repeat: no-repeat;
}
.title-text {
    height: 28px;
    padding-left: 2px;
    font-size: 20px;
    line-height: 23px;
    color: #0d5cad;
    background-color: #fafcfb;
}
.field {
    height: 47px;
    padding-left: 2px;
    font-size: 17px;
    line-height: 20px;
    color: #111;
    background-color: #f1f6fc;
}
.field.erp {
    height: 37px;
}
.code {
    display: flex;
    justify-content: center;
    height: 84px;
    padding-top: 4px;
}

/* status bar */
.status {
    display: flex;
    align-items: center;
    height: 33px;
    margin-bottom: 1px;
    border-radius: 0 0 9px 9px;
    color: #fff;
    background-color: #7fb92b;
}
.status > * {
    height: 22px;
}
.units {
    gap: 5px;
    padding: 0 19px 0 21px;
    border-right: 1px solid #a5cf68;
}
.check {
    gap: 8px;
    padding: 0 16px 0 11px;
}
.warnings {
    display: flex;
    align-items: center;
    gap: 3px;
    padding-right: 4px;
    border-right: 1px solid #a5cf68;
}
.cell {
    padding: 0 13px 0 12px;
    border-right: 1px solid #a5cf68;
    line-height: 22px;
}
.views {
    display: flex;
    gap: 19px;
    margin-left: auto;
    padding: 0 12px;
    border: solid #a5cf68;
    border-width: 0 1px;
}
.zoom {
    display: flex;
    align-items: center;
    padding: 0 10px 0 15px;
}
.zoom input {
    width: 94px;
    height: 14px;
    margin: 0 17px;
    background: linear-gradient(#e4f1cc, #e4f1cc) center / 100% 1px no-repeat;
    appearance: none;
}
.zoom input::-webkit-slider-thumb {
    width: 5px;
    height: 14px;
    background-color: #fff;
    appearance: none;
}
.percent {
    margin-left: 21px;
}
```
